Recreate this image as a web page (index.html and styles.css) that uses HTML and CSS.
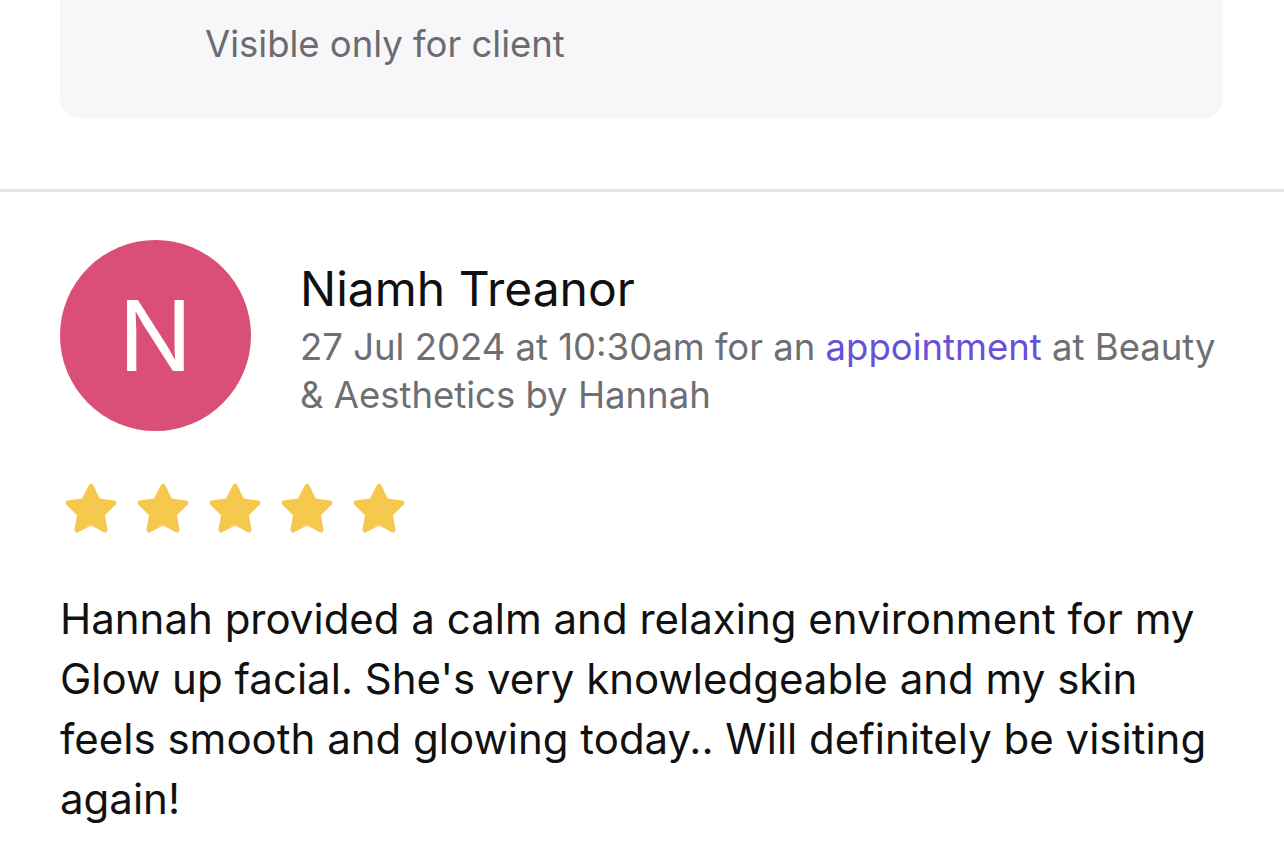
FILE: index.html
```html
<!DOCTYPE html>
<html>
<head>
<meta charset="utf-8">
<link rel="stylesheet" href="styles.css">
</head>
<body>
<div class="page">
  <section class="note-card">
    <p class="note-text">Visible only for client</p>
  </section>
  <hr class="divider">
  <article class="review">
    <header class="review-head">
      <div class="avatar">N</div>
      <div class="review-meta">
        <h2 class="review-name">Niamh Treanor</h2>
        <p class="review-info">27 Jul 2024 at 10:30am for an <a class="link" href="#">appointment</a> at Beauty &amp; Aesthetics by Hannah</p>
      </div>
    </header>
    <div class="stars">
      <svg class="star" viewBox="0 0 24 24"><path d="M12 2.2c.4 0 .7.2.9.6l2.5 5.1 5.6.8c.8.1 1.1 1.1.5 1.7l-4.1 4 1 5.6c.1.8-.7 1.4-1.4 1l-5-2.6-5 2.6c-.7.4-1.5-.2-1.4-1l1-5.6-4.1-4c-.6-.6-.3-1.6.5-1.7l5.6-.8 2.5-5.1c.2-.4.5-.6.9-.6z"/></svg>
      <svg class="star" viewBox="0 0 24 24"><path d="M12 2.2c.4 0 .7.2.9.6l2.5 5.1 5.6.8c.8.1 1.1 1.1.5 1.7l-4.1 4 1 5.6c.1.8-.7 1.4-1.4 1l-5-2.6-5 2.6c-.7.4-1.5-.2-1.4-1l1-5.6-4.1-4c-.6-.6-.3-1.6.5-1.7l5.6-.8 2.5-5.1c.2-.4.5-.6.9-.6z"/></svg>
      <svg class="star" viewBox="0 0 24 24"><path d="M12 2.2c.4 0 .7.2.9.6l2.5 5.1 5.6.8c.8.1 1.1 1.1.5 1.7l-4.1 4 1 5.6c.1.8-.7 1.4-1.4 1l-5-2.6-5 2.6c-.7.4-1.5-.2-1.4-1l1-5.6-4.1-4c-.6-.6-.3-1.6.5-1.7l5.6-.8 2.5-5.1c.2-.4.5-.6.9-.6z"/></svg>
      <svg class="star" viewBox="0 0 24 24"><path d="M12 2.2c.4 0 .7.2.9.6l2.5 5.1 5.6.8c.8.1 1.1 1.1.5 1.7l-4.1 4 1 5.6c.1.8-.7 1.4-1.4 1l-5-2.6-5 2.6c-.7.4-1.5-.2-1.4-1l1-5.6-4.1-4c-.6-.6-.3-1.6.5-1.7l5.6-.8 2.5-5.1c.2-.4.5-.6.9-.6z"/></svg>
      <svg class="star" viewBox="0 0 24 24"><path d="M12 2.2c.4 0 .7.2.9.6l2.5 5.1 5.6.8c.8.1 1.1 1.1.5 1.7l-4.1 4 1 5.6c.1.8-.7 1.4-1.4 1l-5-2.6-5 2.6c-.7.4-1.5-.2-1.4-1l1-5.6-4.1-4c-.6-.6-.3-1.6.5-1.7l5.6-.8 2.5-5.1c.2-.4.5-.6.9-.6z"/></svg>
    </div>
    <p class="review-text">Hannah provided a calm and relaxing environment for my Glow up facial. She's very knowledgeable and my skin feels smooth and glowing today.. Will definitely be visiting again!</p>
  </article>
</div>
</body>
</html>
```

FILE: styles.css
```css
* { box-sizing: border-box; }
html, body {
  margin: 0;
  padding: 0;
  background: #ffffff;
  font-family: "Inter", "Roboto", "Liberation Sans", sans-serif;
}
.page {
  width: 1284px;
  height: 850px;
  overflow: hidden;
}
.note-card {
  margin: 0 61px 0 60px;
  height: 118px;
  background: #f7f7f9;
  border-radius: 0 0 20px 20px;
  padding: 21px 0 0 145px;
}
.note-text {
  margin: 0;
  font-size: 36.5px;
  line-height: 46px;
  color: #6b6b70;
}
.divider {
  margin: 71px 0 0 0;
  border: 0;
  height: 3px;
  background: #e6e6e8;
}
.review {
  padding: 48px 60px 0 60px;
}
.review-head {
  display: flex;
  align-items: flex-start;
  gap: 49px;
}
.avatar {
  flex: 0 0 191px;
  width: 191px;
  height: 191px;
  border-radius: 50%;
  background: #d94f78;
  color: #ffffff;
  font-size: 98px;
  font-weight: 400;
  display: flex;
  align-items: center;
  justify-content: center;
  line-height: 1;
}
.review-meta {
  padding-top: 19px;
  flex: 1;
}
.review-name {
  margin: 0;
  font-size: 48px;
  font-weight: 400;
  line-height: 60px;
  color: #101010;
}
.review-info {
  margin: 4px 0 0 0;
  font-size: 36.5px;
  line-height: 48px;
  color: #6e6e73;
}
.link {
  color: #6950d8;
  text-decoration: none;
}
.stars {
  display: flex;
  gap: 10px;
  margin-top: 47px;
  margin-left: 0;
}
.star {
  width: 62px;
  height: 62px;
  fill: #f6c94e;
}
.review-text {
  margin: 49px 0 0 0;
  width: 1160px;
  font-size: 42px;
  line-height: 60px;
  color: #111111;
}
```
